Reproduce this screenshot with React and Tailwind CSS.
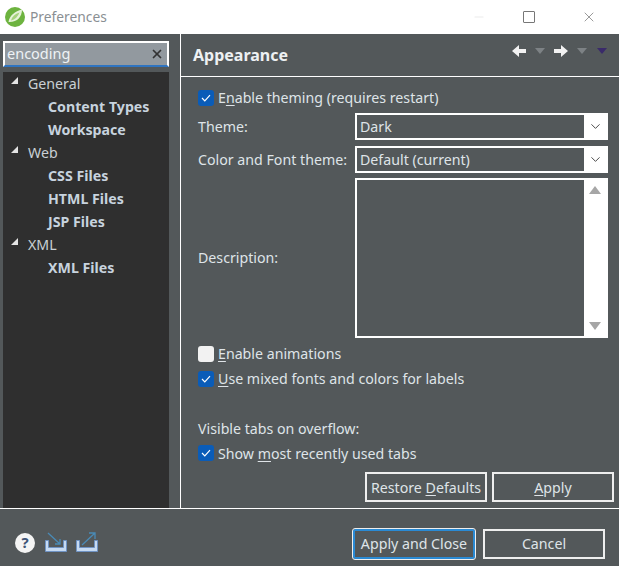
import React from "react";
import { ChevronDown, X, Minus } from "lucide-react";

const U = ({ children }) => <span className="underline underline-offset-2 decoration-1">{children}</span>;

const CheckBox = ({ checked = true, children }) => (
  <div className="flex items-center h-5 gap-[4px] text-[#dfe4e8]">
    {checked ? (
      <span className="w-[16px] h-[16px] rounded-[3px] bg-[#0a5cb8] flex items-center justify-center">
        <svg width="10" height="8" viewBox="0 0 10 8" fill="none" stroke="#fff" strokeWidth="1.2">
          <path d="M1 4 L3.8 6.8 L9 1.2" />
        </svg>
      </span>
    ) : (
      <span className="w-[16px] h-[16px] rounded-[3px] bg-[#f2f2f2]" />
    )}
    <span>{children}</span>
  </div>
);

const TreeGroup = ({ label, items }) => (
  <div>
    <div className="h-[23px] flex items-center pl-[8px] gap-[11px] text-[#c9d0d4]">
      <svg width="7" height="7" viewBox="0 0 7 7" className="mb-[6px]">
        <path d="M7 0 V7 H0 Z" fill="#e4e4e4" />
      </svg>
      <span className="ml-[-1px]">{label}</span>
    </div>
    {items.map((item) => (
      <div key={item} className="h-[23px] flex items-center pl-[45px] font-bold text-[#c7d3de]">
        {item}
      </div>
    ))}
  </div>
);

const Combo = ({ value }) => (
  <div className="w-[253px] h-[27px] flex border-2 border-white bg-[#53585a] text-[#dfe4e8]">
    <div className="flex-1 pl-[3px] leading-[23px]">{value}</div>
    <div className="w-[22px] bg-white flex items-center justify-center">
      <ChevronDown size={15} strokeWidth={1.3} color="#222" />
    </div>
  </div>
);

const Btn = ({ children, className = "" }) => (
  <button className={`h-[30px] border-2 border-[#eeeeee] text-[#dfe4e8] ${className}`}>{children}</button>
);

const ToolTri = ({ color = "#7d8285" }) => (
  <svg width="10" height="6" viewBox="0 0 10 6" className="block">
    <path d="M0 0 H10 L5 6 Z" fill={color} />
  </svg>
);

const Arrow = ({ flip }) => (
  <svg width="14" height="12" viewBox="0 0 14 12" className={`block ${flip ? "-scale-x-100" : ""}`}>
    <path d="M0 4 H7 V0 L14 6 L7 12 V8 H0 Z" fill="#f2f2f2" />
  </svg>
);

const Tray = ({ children }) => (
  <svg width="22" height="20" viewBox="0 0 22 20" fill="none" className="block">
    <path d="M0.5 8.5 V19.5 H21.5 V8.5 H18.5 V15.5 H3.5 V8.5 Z" stroke="#6f93c4" fill="#c6daf2" strokeWidth="1" />
    {children}
  </svg>
);

export default function App() {
  return (
    <div
      className="w-[622px] h-[566px] bg-white flex flex-col text-[14.2px] overflow-hidden pr-[3px]"
      style={{ fontFamily: '"Noto Sans", "Open Sans", sans-serif' }}
    >
      {/* title bar */}
      <div className="h-[34px] flex items-center pl-[5px] shrink-0">
        <svg width="20" height="20" viewBox="0 0 20 20">
          <circle cx="10" cy="10" r="10" fill="#6db33f" />
          <path d="M17 2.5 C17 10 12 15.5 3.5 15 C4.5 8 10 4.5 17 2.5 Z" fill="#e6f2d8" />
          <path d="M14.5 5.5 C13 9.5 10 12.5 6 13.5 C7 9.5 10 7 14.5 5.5 Z" fill="#a5d27c" />
        </svg>
        <span className="ml-[5px] text-[#8a8f93] text-[13.8px]">Preferences</span>
        <div className="ml-auto flex items-center">
          <Minus size={14} strokeWidth={1} color="#ddd" className="mr-[37px]" />
          <span className="w-[12px] h-[12px] border border-[#777] rounded-[1px] mr-[46px]" />
          <X size={16} strokeWidth={1} color="#666" className="mr-[22px]" />
        </div>
      </div>

      <div className="flex-1 flex flex-col bg-[#53585a] min-h-0">
        <div className="h-[474px] flex shrink-0">
          {/* left column */}
          <div className="w-[180px] pl-[3px] pr-[11px] pt-[7px] shrink-0">
            <div className="h-[26px] border-2 border-white border-b-[#2f74c0] bg-[#92999f] flex items-center justify-between pl-[2px] pr-[3px] text-[#eef2f5] text-[14.5px]">
              <span>encoding</span>
              <X size={14} strokeWidth={3} color="#333" />
            </div>
            <div className="mt-[5px] h-[436px] bg-[#2f2f2f]">
              <TreeGroup label="General" items={["Content Types", "Workspace"]} />
              <TreeGroup label="Web" items={["CSS Files", "HTML Files", "JSP Files"]} />
              <TreeGroup label="XML" items={["XML Files"]} />
            </div>
          </div>

          {/* right column */}
          <div className="flex-1 border-l border-white flex flex-col min-w-0">
            <div className="h-[43px] border-b border-white flex items-center pl-[12px] pr-[12px] shrink-0">
              <span className="text-[16px] font-bold text-[#eef1f3]">Appearance</span>
              <div className="ml-auto flex items-center gap-[9px] mb-[8px]">
                <Arrow flip />
                <ToolTri />
                <Arrow />
                <ToolTri />
                <span className="ml-[1px]"><ToolTri color="#3a2a6a" /></span>
              </div>
            </div>

            <div className="pl-[17px] pr-[11px] pt-[11px] text-[#dfe4e8] flex flex-col flex-1">
              <CheckBox>E<U>n</U>able theming (requires restart)</CheckBox>
              <div className="flex items-center justify-between mt-[5px]">
                <span>Theme:</span>
                <Combo value="Dark" />
              </div>
              <div className="flex items-center justify-between mt-[6px]">
                <span>Color and Font theme:</span>
                <Combo value="Default (current)" />
              </div>
              <div className="flex items-center justify-between mt-[5px]">
                <span>Description:</span>
                <div className="w-[253px] h-[160px] border-2 border-white flex">
                  <div className="flex-1" />
                  <div className="w-[22px] bg-white flex flex-col items-center justify-between py-[6px]">
                    <svg width="12" height="8" viewBox="0 0 12 8"><path d="M0 8 L6 0 L12 8 Z" fill="#a6a6a6" /></svg>
                    <svg width="12" height="8" viewBox="0 0 12 8"><path d="M0 0 L12 0 L6 8 Z" fill="#a6a6a6" /></svg>
                  </div>
                </div>
              </div>
              <div className="mt-[6px]">
                <CheckBox checked={false}><U>E</U>nable animations</CheckBox>
              </div>
              <div className="mt-[5px]">
                <CheckBox><U>U</U>se mixed fonts and colors for labels</CheckBox>
              </div>
              <div className="mt-[29px]">Visible tabs on overflow:</div>
              <div className="mt-[4px]">
                <CheckBox>Show <U>m</U>ost recently used tabs</CheckBox>
              </div>
              <div className="flex justify-end gap-[5px] mt-[9px] -mr-[6px]">
                <Btn className="w-[122px]">Restore <U>D</U>efaults</Btn>
                <Btn className="w-[122px]"><U>A</U>pply</Btn>
              </div>
            </div>
          </div>
        </div>

        {/* footer */}
        <div className="flex-1 border-t border-white flex items-center pl-[15px] pr-[14px] pt-[12px]">
          <span className="w-[20px] h-[20px] rounded-full bg-[#f4f4f4] text-[#3f5578] font-bold text-[15px] flex items-center justify-center mb-[2px]">?</span>
          <span className="ml-[10px] mb-[4px]">
            <Tray><path d="M3 1 L15 12 M15 7 V12 H10" stroke="#4a8ab5" strokeWidth="1.3" /></Tray>
          </span>
          <span className="ml-[9px] mb-[4px]">
            <Tray><path d="M6 13 L19 1 M13 1 H19 V7" stroke="#4a8ab5" strokeWidth="1.3" /></Tray>
          </span>
          <div className="ml-auto flex gap-[8px]">
            <Btn className="w-[122px] rounded-[2px] !border-[#2a8ad4] outline-1 outline-[#eee]">Apply and Close</Btn>
            <Btn className="w-[122px]">Cancel</Btn>
          </div>
        </div>
      </div>
    </div>
  );
}
